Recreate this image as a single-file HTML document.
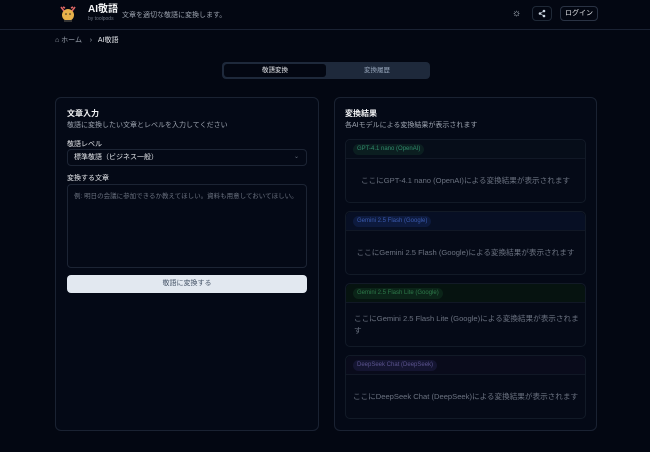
<!DOCTYPE html>
<html><head><meta charset="utf-8"><style>
*{box-sizing:border-box;margin:0;padding:0}
body{width:650px;height:452px;background:#030712;font-family:"Liberation Sans","Noto Sans CJK JP",sans-serif;color:#e5e7eb;position:relative;overflow:hidden}
.abs{position:absolute}
.hdr{left:0;top:0;width:650px;height:30px;border-bottom:1px solid #1a2233}
.t{font-size:7px;color:#9ca3af}
.card{border:1px solid #1a2232;border-radius:6px;background:#040916}
.res{border:1px solid #121a27;border-radius:5px;background:#050a17;left:345px;width:241px;height:64px}
.res .h{height:19px;border-bottom:1px solid #111826;background:#060d19;border-radius:5px 5px 0 0;position:relative}
.res .b{position:absolute;left:8px;right:8px;top:19px;bottom:0;display:flex;align-items:center;justify-content:center;font-size:7.6px;color:#6b7280;text-align:center;line-height:12px;white-space:nowrap}
.pill{position:absolute;left:7px;top:4px;height:11px;border-radius:6px;font-size:6px;line-height:11px;padding:0 4px;white-space:nowrap}
</style></head><body>
<div class="abs hdr"></div>
<div class="abs" style="left:57px;top:4px;width:22px;height:21px">
<svg width="22" height="21" viewBox="0 0 22 21"><circle cx="11" cy="11" r="6" fill="#e6b04a"/><path d="M4 3l3 4M18 3l-3 4M6 3l2 1M16 3l-2 1" stroke="#d66" stroke-width="1.6"/><rect x="7" y="16" width="8" height="2" fill="#333"/><circle cx="9" cy="10" r=".8" fill="#222"/><circle cx="13" cy="10" r=".8" fill="#222"/></svg></div>
<div class="abs" style="left:88px;top:4px;font-size:10px;line-height:12px;font-weight:bold;color:#f3f4f6">AI敬語</div>
<div class="abs" style="left:88px;top:16px;font-size:5px;line-height:6px;color:#6b7280">by toolpods</div>
<div class="abs t" style="left:122px;top:10px;color:#9ca3af">文章を適切な敬語に変換します。</div>
<div class="abs" style="left:512px;top:8px;font-size:10px;color:#cbd5e1">☼</div>
<div class="abs" style="left:532px;top:6px;width:20px;height:15px;border:1px solid #1f2937;border-radius:4px"><svg width="18" height="13" viewBox="0 0 18 13"><g fill="#cbd5e1"><circle cx="7" cy="6.5" r="1.3"/><circle cx="11" cy="4" r="1.3"/><circle cx="11" cy="9" r="1.3"/></g><path d="M7 6.5L11 4M7 6.5L11 9" stroke="#cbd5e1" stroke-width=".7"/></svg></div>
<div class="abs" style="left:560px;top:6px;width:38px;height:15px;border:1px solid #2a3344;border-radius:4px;font-size:7px;line-height:13px;text-align:center;color:#e5e7eb">ログイン</div>
<div class="abs t" style="left:55px;top:35px">⌂ ホーム &nbsp;&nbsp;&nbsp;›&nbsp;&nbsp; <span style="color:#e5e7eb">AI敬語</span></div>
<div class="abs" style="left:222px;top:62px;width:208px;height:17px;background:#1e293b;border-radius:4px"></div>
<div class="abs" style="left:224px;top:64px;width:102px;height:13px;background:#030712;border-radius:3px;font-size:6.5px;line-height:13px;text-align:center;color:#e5e7eb">敬語変換</div>
<div class="abs" style="left:326px;top:64px;width:102px;height:13px;font-size:6.5px;line-height:13px;text-align:center;color:#94a3b8">変換履歴</div>

<div class="abs card" style="left:55px;top:97px;width:264px;height:334px"></div>
<div class="abs" style="left:67px;top:108px;font-size:8px;font-weight:bold;color:#f3f4f6">文章入力</div>
<div class="abs t" style="left:67px;top:120px">敬語に変換したい文章とレベルを入力してください</div>
<div class="abs" style="left:67px;top:139px;font-size:7px;color:#e5e7eb">敬語レベル</div>
<div class="abs" style="left:67px;top:149px;width:240px;height:17px;border:1px solid #1c2434;border-radius:4px;font-size:7px;line-height:15px;padding-left:6px;color:#e5e7eb">標準敬語（ビジネス一般）<span style="position:absolute;right:7px;color:#6b7280;font-size:6px">⌄</span></div>
<div class="abs" style="left:67px;top:173px;font-size:7px;color:#e5e7eb">変換する文章</div>
<div class="abs" style="left:67px;top:184px;width:240px;height:84px;border:1px solid #1c2434;border-radius:4px;font-size:6.5px;padding:5px 6px;color:#6b7280">例: 明日の会議に参加できるか教えてほしい。資料も用意しておいてほしい。</div>
<div class="abs" style="left:67px;top:275px;width:240px;height:18px;background:#e2e8f0;border-radius:4px;font-size:7px;line-height:18px;text-align:center;color:#475569">敬語に変換する</div>

<div class="abs card" style="left:334px;top:97px;width:263px;height:334px"></div>
<div class="abs" style="left:345px;top:108px;font-size:8px;font-weight:bold;color:#f3f4f6">変換結果</div>
<div class="abs t" style="left:345px;top:120px">各AIモデルによる変換結果が表示されます</div>

<div class="abs res" style="top:139px"><div class="h"><span class="pill" style="background:#0b1e20;color:#2f8a6a">GPT-4.1 nano (OpenAI)</span></div><div class="b">ここにGPT-4.1 nano (OpenAI)による変換結果が表示されます</div></div>
<div class="abs res" style="top:211px"><div class="h" style="background:#070f24"><span class="pill" style="background:#0d1a3d;color:#3b5bb0">Gemini 2.5 Flash (Google)</span></div><div class="b">ここにGemini 2.5 Flash (Google)による変換結果が表示されます</div></div>
<div class="abs res" style="top:283px"><div class="h" style="background:#061310"><span class="pill" style="background:#0b2418;color:#2e7a4a">Gemini 2.5 Flash Lite (Google)</span></div><div class="b" style="justify-content:flex-start;text-align:left;white-space:normal;width:228px;right:auto">ここにGemini 2.5 Flash Lite (Google)による変換結果が表示されます</div></div>
<div class="abs res" style="top:355px"><div class="h" style="background:#090b1b"><span class="pill" style="background:#141531;color:#5b548f">DeepSeek Chat (DeepSeek)</span></div><div class="b">ここにDeepSeek Chat (DeepSeek)による変換結果が表示されます</div></div>
</body></html>
